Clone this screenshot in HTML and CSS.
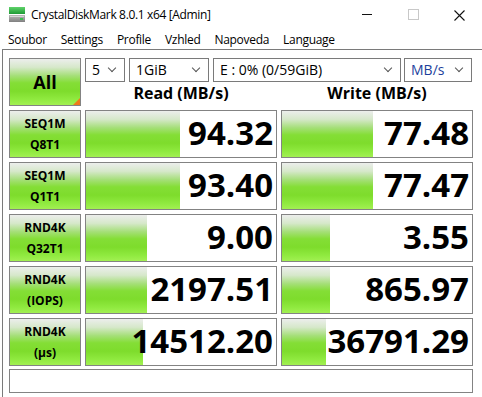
FILE: index.html
```html
<!DOCTYPE html>
<html lang="cs">
<head>
  <meta charset="UTF-8" />
  <title>CrystalDiskMark 8.0.1 x64 [Admin]</title>
  <link rel="stylesheet" href="styles.css">
</head>
<body>
  <div class="titlebar">
    <svg class="app-icon" width="17" height="15" viewBox="0 0 17 15">
      <defs>
        <linearGradient id="g-top" x1="0" y1="0" x2="0" y2="1">
          <stop offset="0" stop-color="#5fd36a"/>
          <stop offset="1" stop-color="#1f9a36"/>
        </linearGradient>
        <linearGradient id="g-bot" x1="0" y1="0" x2="0" y2="1">
          <stop offset="0" stop-color="#b9b9b9"/>
          <stop offset="1" stop-color="#808080"/>
        </linearGradient>
      </defs>
      <rect x="0" y="0" width="16" height="7" fill="url(#g-top)"/>
      <rect x="0" y="8" width="16" height="7" fill="url(#g-bot)"/>
      <rect x="1" y="9" width="14" height="1" fill="#d6d6d6"/>
      <rect x="11" y="11" width="3" height="2" fill="#3cc04e"/>
    </svg>
    <span class="title">CrystalDiskMark 8.0.1 x64 [Admin]</span>
    <div class="caption">
      <span class="cap-btn"><span class="min-line"></span></span>
      <span class="cap-btn"><span class="max-box"></span></span>
      <span class="cap-btn">
        <svg width="11" height="11" viewBox="0 0 11 11"><path d="M0.5 0.5 L10.5 10.5 M10.5 0.5 L0.5 10.5" stroke="#111" stroke-width="1.1" fill="none"/></svg>
      </span>
    </div>
  </div>

  <div class="menubar">
    <span>Soubor</span>
    <span>Settings</span>
    <span>Profile</span>
    <span>Vzhled</span>
    <span>Napoveda</span>
    <span>Language</span>
  </div>

  <div class="client">
    <div class="top">
      <div class="test-btn all">All<span class="corner"></span></div>
      <div class="combos">
        <div class="combo w-count"><span>5</span><i class="chev"></i></div>
        <div class="combo w-size"><span>1GiB</span><i class="chev"></i></div>
        <div class="combo w-drive"><span>E : 0% (0/59GiB)</span><i class="chev"></i></div>
        <div class="combo w-unit blue"><span>MB/s</span><i class="chev"></i></div>
      </div>
      <div class="head">Read (MB/s)</div>
      <div class="head">Write (MB/s)</div>
    </div>

    <div class="results">
      <div class="test-btn">SEQ1M<br>Q8T1</div>
      <div class="cell"><div class="bar" style="width:94px"></div><div class="val">94.32</div></div>
      <div class="cell"><div class="bar" style="width:91px"></div><div class="val">77.48</div></div>

      <div class="test-btn">SEQ1M<br>Q1T1</div>
      <div class="cell"><div class="bar" style="width:94px"></div><div class="val">93.40</div></div>
      <div class="cell"><div class="bar" style="width:91px"></div><div class="val">77.47</div></div>

      <div class="test-btn">RND4K<br>Q32T1</div>
      <div class="cell"><div class="bar" style="width:61px"></div><div class="val">9.00</div></div>
      <div class="cell"><div class="bar" style="width:48px"></div><div class="val">3.55</div></div>

      <div class="test-btn">RND4K<br>(IOPS)</div>
      <div class="cell"><div class="bar" style="width:61px"></div><div class="val">2197.51</div></div>
      <div class="cell"><div class="bar" style="width:48px"></div><div class="val">865.97</div></div>

      <div class="test-btn">RND4K<br>(µs)</div>
      <div class="cell"><div class="bar" style="width:57px"></div><div class="val">14512.20</div></div>
      <div class="cell"><div class="bar" style="width:44px"></div><div class="val">36791.29</div></div>
    </div>

    <div class="statusbar"></div>
  </div>
</body>
</html>
```

FILE: styles.css
```css
:root {
  --edge: #7a7a7a;
  --box: #838383;
  --meter: linear-gradient(to bottom, #eceeec 0%, #d6e8ca 18%, #a6df7a 36%, #84de36 52%, #7edc2c 70%, #90ea40 88%, #a2f052 100%);
}

html, body {
  margin: 0;
  padding: 0;
}

body {
  width: 482px;
  height: 397px;
  overflow: hidden;
  background: #fff;
  color: #000;
  font-family: 'Open Sans', 'Noto Sans', sans-serif;
}

.titlebar {
  height: 30px;
  display: flex;
  align-items: center;
}

.app-icon {
  margin-left: 9px;
  margin-top: -2px;
}

.title {
  margin-left: 5px;
  font-size: 12px;
  letter-spacing: -0.35px;
  margin-top: -1px;
}

.caption {
  margin-left: auto;
  display: flex;
  height: 30px;
}

.cap-btn {
  width: 46px;
  height: 30px;
  display: flex;
  align-items: center;
  justify-content: center;
}

.min-line {
  width: 10px;
  height: 1px;
  background: #111;
  margin-top: -1px;
}

.max-box {
  width: 9px;
  height: 9px;
  border: 1px solid #c8c8c8;
  margin-top: -1px;
}

.menubar {
  height: 19px;
  display: flex;
  align-items: center;
  gap: 14px;
  padding-left: 8px;
  font-size: 12px;
  letter-spacing: -0.3px;
}

.client {
  margin-left: 2px;
  width: 477px;
  height: 347px;
  border-left: 1px solid var(--edge);
  border-right: 1px solid var(--edge);
  border-top: 1px solid var(--edge);
  padding: 8px 6px 0 6px;
}

.top {
  display: grid;
  grid-template-columns: 72px 192px 192px;
  grid-template-rows: 24px 24px;
  column-gap: 4px;
}

.test-btn {
  box-sizing: border-box;
  border: 1px solid var(--box);
  background: var(--meter);
  display: flex;
  align-items: center;
  justify-content: center;
  text-align: center;
  font-weight: 700;
  font-size: 12px;
  line-height: 21px;
}

.all {
  grid-row: 1 / 3;
  position: relative;
  font-size: 18px;
}

.corner {
  position: absolute;
  right: 0;
  bottom: 0;
  width: 0;
  height: 0;
  border-left: 7px solid transparent;
  border-bottom: 7px solid #f07a1a;
}

.combos {
  grid-column: 2 / 4;
  display: flex;
  gap: 4px;
}

.combo {
  box-sizing: border-box;
  height: 24px;
  border: 1px solid var(--edge);
  display: flex;
  align-items: center;
  padding-left: 6px;
  padding-right: 9px;
  font-size: 14px;
}

.combo span {
  flex: 1;
  margin-top: -1px;
}

.combo.blue span {
  color: #1d3f9c;
}

.w-count { width: 40px; }
.w-size { width: 80px; }
.w-drive { width: 188px; }
.w-unit { width: 68px; margin-left: -1px; }

.chev {
  width: 5px;
  height: 5px;
  border-right: 1px solid #555;
  border-bottom: 1px solid #555;
  transform: rotate(45deg);
  margin-top: -4px;
}

.head {
  text-align: center;
  font-weight: 700;
  font-size: 16px;
  line-height: 24px;
  margin-top: -1px;
}

.results {
  margin-top: 4px;
  display: grid;
  grid-template-columns: 72px 192px 192px;
  grid-auto-rows: 48px;
  gap: 4px;
}

.cell {
  box-sizing: border-box;
  border: 1px solid var(--box);
  background: #fff;
  display: grid;
}

.bar,
.val {
  grid-area: 1 / 1;
}

.bar {
  background: var(--meter);
}

.val {
  justify-self: end;
  align-self: center;
  padding-right: 3px;
  font-weight: 700;
  font-size: 33px;
  line-height: 40px;
  margin-top: -2px;
}

.statusbar {
  box-sizing: border-box;
  margin-top: 3px;
  width: 464px;
  height: 24px;
  border: 1px solid var(--box);
}
```
